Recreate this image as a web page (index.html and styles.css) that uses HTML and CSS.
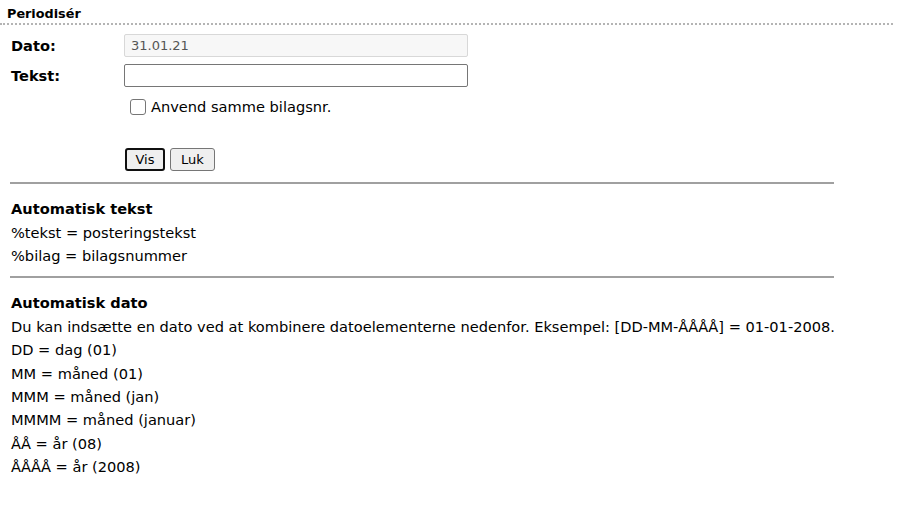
FILE: index.html
```html
<!DOCTYPE html>
<html>
<head>
<meta charset="utf-8">
<link rel="stylesheet" href="styles.css">
</head>
<body>
<div class="title">Periodisér</div>
<div class="content">
  <div class="form">
    <label class="lbl">Dato:</label>
    <input class="inp inp-disabled" type="text" value="31.01.21" disabled>
    <label class="lbl">Tekst:</label>
    <input class="inp" type="text" value="">
    <div></div>
    <label class="chk"><span class="box"></span>Anvend samme bilagsnr.</label>
    <div></div>
    <div class="btns"><button class="btn btn-focus">Vis</button><button class="btn">Luk</button></div>
  </div>
  <hr class="sep">
  <div class="section">
    <div class="h">Automatisk tekst</div>
    <div class="line">%tekst = posteringstekst</div>
    <div class="line">%bilag = bilagsnummer</div>
  </div>
  <hr class="sep">
  <div class="section">
    <div class="h">Automatisk dato</div>
    <div class="line">Du kan indsætte en dato ved at kombinere datoelementerne nedenfor. Eksempel: [DD-MM-ÅÅÅÅ] = 01-01-2008.</div>
    <div class="line">DD = dag (01)</div>
    <div class="line">MM = måned (01)</div>
    <div class="line">MMM = måned (jan)</div>
    <div class="line">MMMM = måned (januar)</div>
    <div class="line">ÅÅ = år (08)</div>
    <div class="line">ÅÅÅÅ = år (2008)</div>
  </div>
</div>
</body>
</html>
```
FILE: styles.css
```css
html, body { margin: 0; padding: 0; background: #fff; }
body { font-family: "DejaVu Sans", Verdana, sans-serif; color: #000; font-size: 14.6px; }
.title {
  font-weight: bold; font-size: 12.8px; padding: 8px 0 3px 7px; margin-right: 7px;
  border-bottom: 2px dotted #b4b4b4; line-height: 12px;
}
.content { padding: 9px 66px 0 10px; }
.form {
  display: grid; grid-template-columns: 114px 344px; row-gap: 7px; align-items: center; margin-bottom: 11px;
}
.lbl { font-weight: bold; font-size: 14.6px; padding-left: 1px; }
.inp {
  box-sizing: border-box; width: 344px; height: 23px; margin: 0; font-family: "DejaVu Sans", Verdana, sans-serif;
  font-size: 13px; border: 1px solid #767676; border-radius: 2px; padding: 1px 6px; background: #fff;
}
.inp-disabled { background: #f7f7f7; border-color: #d8d8d8; color: #555; }
.chk { display: flex; align-items: center; font-size: 14.6px; margin-top: 4px; margin-left: 6px; }
.box {
  display: inline-block; box-sizing: border-box; width: 16px; height: 16px; border: 1px solid #767676; border-radius: 3px; margin-right: 5px; background: #fff;
}
.btns { display: flex; gap: 5px; margin-top: 26px; padding-left: 1px; }
.btn {
  font-family: "DejaVu Sans", Verdana, sans-serif; font-size: 13px; height: 23px; padding: 0 10px; box-sizing: border-box;
  background: #efefef; border: 1px solid #767676; border-radius: 3px; margin: 0; color: #000; min-width: 40px;
}
.btn-focus { border: 2px solid #101010; padding: 0 8px; }
.sep { border: 0; border-top: 2px solid #a0a0a0; margin: 0; height: 0; }
.section { padding: 13px 0 8px 1px; }
.h { font-weight: bold; font-size: 14.6px; line-height: 24px; }
.line { line-height: 23.4px; white-space: nowrap; }
```
